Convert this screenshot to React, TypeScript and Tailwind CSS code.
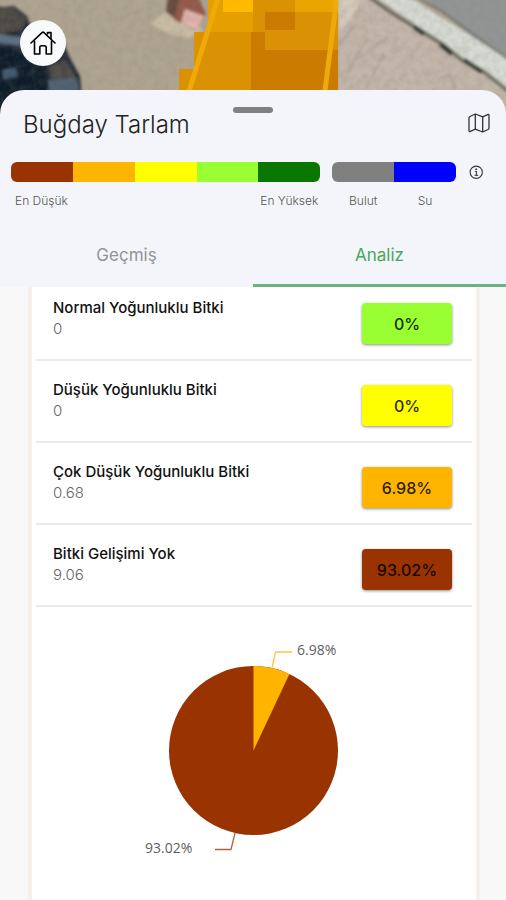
import React, { useState } from 'react'
import clsx from 'clsx'
import { IoInformationCircleOutline } from 'react-icons/io5'

const densityScale = [
  'bg-[#993300]',
  'bg-[#ffb400]',
  'bg-[#ffff00]',
  'bg-[#99ff33]',
  'bg-[#0a7800]',
]

const rows = [
  {
    title: 'Normal Yoğunluklu Bitki',
    area: '0',
    percent: '0%',
    color: 'bg-[#99ff33]',
  },
  {
    title: 'Düşük Yoğunluklu Bitki',
    area: '0',
    percent: '0%',
    color: 'bg-[#ffff00]',
  },
  {
    title: 'Çok Düşük Yoğunluklu Bitki',
    area: '0.68',
    percent: '6.98%',
    color: 'bg-[#ffb400]',
  },
  {
    title: 'Bitki Gelişimi Yok',
    area: '9.06',
    percent: '93.02%',
    color: 'bg-[#993300]',
  },
]

const HomeIcon = () => (
  <svg
    width="26"
    height="26"
    viewBox="0 0 26 26"
    fill="none"
    stroke="currentColor"
    strokeWidth="1.6"
    strokeLinecap="round"
    strokeLinejoin="round"
  >
    <path d="M1 13L12.300 2.400Q13 1.800 13.700 2.400L25 13" />
    <path d="M4.500 11V24H9.800V17.500Q9.800 15.800 11.500 15.800H14.500Q16.200 15.800 16.200 17.500V24H21.500V11" />
    <path d="M17.500 4V2.600H21V8.500" />
  </svg>
)

const MapIcon = () => (
  <svg
    width="22"
    height="20"
    viewBox="0 0 22 20"
    fill="none"
    stroke="currentColor"
    strokeWidth="1.300"
    strokeLinejoin="round"
  >
    <path d="M7.300 1L2 3.500Q1 4 1 5V17.500Q1 19 2.400 18.400L7.300 16.200L14.700 19L20 16.500Q21 16 21 15V2.500Q21 1 19.600 1.600L14.700 3.800Z" />
    <path d="M7.300 1V16.200M14.700 3.800V19" />
  </svg>
)

const SatelliteMap = () => (
  <svg
    className="absolute inset-0 h-full w-full"
    viewBox="0 0 506 114"
    preserveAspectRatio="xMidYMin slice"
    aria-hidden="true"
  >
    <defs>
      <filter id="soft" x="-10%" y="-10%" width="120%" height="120%">
        <feGaussianBlur stdDeviation="1.6" />
      </filter>
      <filter id="grain" x="0" y="0" width="100%" height="100%">
        <feTurbulence type="fractalNoise" baseFrequency="0.13" numOctaves="3" />
        <feColorMatrix values="0 0 0 0 0.25  0 0 0 0 0.22  0 0 0 0 0.18  0.9 0 0 0 -0.32" />
      </filter>
    </defs>
    <rect width="506" height="114" fill="#aea491" />
    <g filter="url(#soft)">
      {/* trees on the left */}
      <path
        d="M-6 8 L14 6 L27 16 L32 30 L64 44 L70 58 L80 76 L84 118 L-6 118Z"
        fill="#232a35"
      />
      <path d="M-6 6 L14 8 L26 18 L22 30 L-6 34Z" fill="#4b4742" />
      <path d="M-6 33 L24 38 L22 46 L-6 42Z" fill="#5b6f82" />
      <path d="M-6 46 L24 50 L46 66 L48 118 L-6 118Z" fill="#111a2c" />
      <path d="M2 70 L16 68 L18 76 L4 79Z" fill="#3f5a70" />
      <path d="M48 66 L66 60 L76 80 L52 84Z" fill="#4b4946" />
      <path d="M48 80 L76 78 L80 92 L50 94Z" fill="#506171" />
      {/* house */}
      <path d="M150 24 L168 10 L204 30 L190 38 L170 34Z" fill="#c9bca4" />
      <path d="M168 -4 L180 -4 L176 20 L166 12Z" fill="#66483c" />
      <path d="M180 -4 L198 -4 L206 14 L196 30 L174 20Z" fill="#93594c" />
      <path d="M185 9 L204 16 L197 30 L181 23Z" fill="#e2b5ac" />
      {/* ploughed land and road on the right */}
      <path d="M338 -6 L370 -6 L512 92 L512 118 L338 118Z" fill="#c2b5aa" />
      <path d="M338 -6 L364 -6 L350 20 L338 32Z" fill="#d3cab9" />
      <path
        d="M338 46 L354 26 M356 60 L390 36 M366 88 L384 54 M346 76 L366 40"
        stroke="#a99e94"
        strokeWidth="1.5"
      />
      <path d="M420 -6 L512 -6 L512 70Z" fill="#929595" />
      <path d="M372 -6 L404 -6 L512 62 L512 92Z" fill="#d6dad2" />
      <path
        d="M411 -6 L440 10 L476 36 L512 62"
        fill="none"
        stroke="#6d706a"
        strokeWidth="2"
      />
      <path
        d="M368 -4 L392 13 L418 29 L442 44 L462 60 L484 72 L512 94"
        fill="none"
        stroke="#6a6a5d"
        strokeWidth="4"
      />
      <path
        d="M414 27 L424 34 M440 44 L452 54 M464 60 L482 72"
        stroke="#33342e"
        strokeWidth="5"
      />
      <path d="M438 80 L450 74 L455 88" fill="none" stroke="#8b7d70" />
    </g>
    <rect width="506" height="114" filter="url(#grain)" opacity="0.45" />
    {/* index raster of the field */}
    <path d="M208 0H338V114H179V69H194V32H208Z" fill="#da9103" />
    <path d="M208 0H253V32H208Z" fill="#e5a000" />
    <path d="M223 0H253V12H223Z" fill="#ffb900" />
    <path d="M295 0H338V12H295Z" fill="#eba500" />
    <path d="M265 12H295V30H265Z M251 32H265V50H338V114H251Z" fill="#cb7b00" />
    <path
      d="M218 -2L182 114M336 -2L335 12L322 114"
      fill="none"
      stroke="#edaa08"
      strokeWidth="5"
    />
  </svg>
)

const PieChart = () => (
  <svg
    className="mx-auto mt-[33px] block h-[230px] w-[240px]"
    viewBox="0 0 240 230"
    role="img"
    aria-label="Bitki yoğunluğu dağılımı"
  >
    <circle cx="119.500" cy="110.500" r="84.500" fill="#993300" />
    <path d="M119.500 110.500V26A84.500 84.500 0 0 1 155.400 34Z" fill="#ffb400" />
    <path d="M138 28L141.500 12H158" fill="none" stroke="#ffc648" strokeWidth="1.3" />
    <path d="M101 193L97 209.500H81" fill="none" stroke="#b5603c" strokeWidth="1.3" />
    <g fill="#606060" className="font-['Open_Sans',sans-serif] text-[14px]">
      <text x="163" y="15">
        6.98%
      </text>
      <text x="11" y="213">
        93.02%
      </text>
    </g>
  </svg>
)

const App = () => {
  const [tab, setTab] = useState('Analiz')

  return (
    <div className="flex min-h-screen flex-col bg-[#f8f8f8] font-['Inter',sans-serif]">
      <header className="relative h-[114px] overflow-hidden">
        <SatelliteMap />
        <button
          type="button"
          aria-label="Ana sayfa"
          className="relative mt-5 ml-5 flex size-[46px] items-center justify-center rounded-full bg-[#f8f9fb] text-black"
        >
          <HomeIcon />
        </button>
      </header>

      <section className="relative -mt-6 rounded-t-3xl bg-[#f4f5fa]">
        <div className="flex justify-center pt-[17px]">
          <div className="h-[6px] w-10 rounded-full bg-[#808080]" />
        </div>
        <div className="flex items-start justify-between pr-4 pl-[23px]">
          <h1 className="text-2xl leading-6 font-light text-[#222]">
            Buğday Tarlam
          </h1>
          <button type="button" aria-label="Harita" className="text-[#333]">
            <MapIcon />
          </button>
        </div>

        <div className="mt-[25px] flex gap-3 pr-[21px] pl-[11px] text-xs leading-[14px] font-light text-[#555]">
          <div className="flex-[5]">
            <div className="flex h-5 overflow-hidden rounded-md">
              {densityScale.map((color) => (
                <div key={color} className={clsx('flex-1', color)} />
              ))}
            </div>
            <div className="mt-3 flex justify-between pr-[2px] pl-1">
              <span>En Düşük</span>
              <span>En Yüksek</span>
            </div>
          </div>
          <div className="flex-[2]">
            <div className="flex h-5 overflow-hidden rounded-md">
              <div className="flex-1 bg-[#808080]" />
              <div className="flex-1 bg-[#0000ff]" />
            </div>
            <div className="mt-3 flex text-center">
              <span className="flex-1">Bulut</span>
              <span className="flex-1">Su</span>
            </div>
          </div>
          <button
            type="button"
            aria-label="Bilgi"
            className="flex h-5 items-center text-[#333]"
          >
            <IoInformationCircleOutline className="size-[17px]" />
          </button>
        </div>

        <div role="tablist" className="mt-4 grid grid-cols-2">
          {['Geçmiş', 'Analiz'].map((name) => (
            <button
              key={name}
              type="button"
              role="tab"
              aria-selected={tab === name}
              onClick={() => setTab(name)}
              className={clsx(
                'h-[63px] border-b-[3px] pt-1 text-[17px]',
                tab === name
                  ? 'border-[#6db37f] text-[#45a95b]'
                  : 'border-transparent text-[#929397]'
              )}
            >
              {name}
            </button>
          ))}
        </div>
      </section>

      <main className="flex flex-1 flex-col overflow-hidden">
        <div className="-mt-2 mr-7 ml-[30px] flex-1 border-x-2 border-[#faf0e3] bg-white px-1 shadow-sm">
          <ul>
            {rows.map((row) => (
              <li
                key={row.title}
                className="flex h-[82px] items-start justify-between border-b-2 border-[#ebebeb] pr-5 pl-[17px]"
              >
                <div className="pt-[18px]">
                  <p className="text-[15px] leading-[22px] font-medium text-[#111]">
                    {row.title}
                  </p>
                  <p className="text-[15px] leading-5 font-light text-[#666]">
                    {row.area}
                  </p>
                </div>
                <button
                  type="button"
                  className={clsx(
                    'mt-6 h-[41px] w-[90px] rounded text-base font-medium text-black/85 shadow-[0_1px_3px_rgba(0,0,0,0.45)]',
                    row.color
                  )}
                >
                  {row.percent}
                </button>
              </li>
            ))}
          </ul>
          <PieChart />
        </div>
      </main>
    </div>
  )
}

export default App
